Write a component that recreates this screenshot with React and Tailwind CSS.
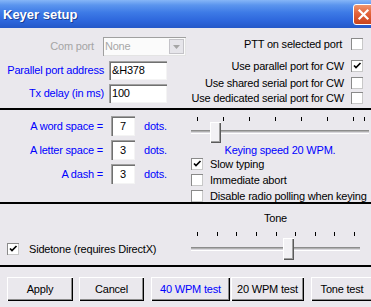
import React from "react";

function Check({ checked }) {
  return (
    <div className="relative w-[12px] h-[12px] shrink-0 bg-white shadow-[inset_1px_1px_0_#8a8a8a,inset_-1px_-1px_0_#c8c8c8]">
      {checked && (
        <svg className="absolute left-0 top-0" width="12" height="12" viewBox="0 0 12 12">
          <path d="M3 5.5 L5 7.5 L9.5 3" fill="none" stroke="#000" strokeWidth="1.7" />
        </svg>
      )}
    </div>
  );
}

function Sep() {
  return <div className="h-[2px] w-full bg-black shrink-0" />;
}

function Thumb({ className }) {
  return (
    <div
      className={
        "absolute w-[11px] bg-[#f2f1f4] shadow-[inset_1px_1px_0_#fff,inset_-1px_-1px_0_#5a5a5a,inset_-2px_-2px_0_#a0a0a0] " +
        className
      }
    />
  );
}

function Track({ className }) {
  return (
    <div
      className={
        "absolute left-0 right-0 h-[4px] bg-[#d8d6dc] shadow-[inset_0_1px_0_#8c8c8c,inset_0_2px_0_#b0b0b0,inset_0_-1px_0_#fff] " +
        className
      }
    />
  );
}

function Tick() {
  return <div className="w-px h-[4px] bg-black" />;
}

function Btn({ children, className }) {
  return (
    <div
      className={
        "h-[24px] flex items-center justify-center shrink-0 bg-[#eae8ed] shadow-[inset_1px_1px_0_#fff,inset_-1px_-1px_0_#000,inset_-2px_-2px_0_#8c8c8c] " +
        className
      }
    >
      {children}
    </div>
  );
}

function CheckRow({ label, checked, gap }) {
  return (
    <div className="h-[12px] flex items-center">
      <span className="whitespace-nowrap">{label}</span>
      <div className={gap}>
        <Check checked={checked} />
      </div>
    </div>
  );
}

export default function App() {
  return (
    <div className="w-[371px] h-[307px] overflow-hidden bg-[#eae8ed] flex flex-col font-['Liberation_Sans',Arial,sans-serif] text-[11px] tracking-[-0.2px] leading-[13px] text-black">
      {/* Title bar */}
      <div className="h-[28px] shrink-0 flex items-center pl-[3px] bg-[linear-gradient(180deg,#86b6f7_0%,#5b95ee_18%,#3d7ae6_45%,#2d66dc_75%,#2458c8_100%)]">
        <span className="text-white font-bold text-[13px] tracking-normal [text-shadow:1px_1px_0_#1a3f95]">
          Keyer setup
        </span>
        <div className="ml-auto -mr-[3px] w-[21px] h-[21px] rounded-[3px] border border-white bg-[linear-gradient(180deg,#f0956c_0%,#e2623a_45%,#c9441e_100%)] flex items-center justify-center">
          <svg width="13" height="13" viewBox="0 0 13 13">
            <path d="M2.5 2.5 L10.5 10.5 M10.5 2.5 L2.5 10.5" stroke="#fff" strokeWidth="2.2" strokeLinecap="square" />
          </svg>
        </div>
      </div>

      {/* Section 1 */}
      <div className="h-[80px] shrink-0 flex">
        <div className="w-[186px] flex flex-col pt-[9px]">
          <div className="h-[19px] flex items-center">
            <span className="w-[104px] text-right text-[#a5a5a5]">Com port</span>
            <div className="ml-[9px] w-[92px] h-[19px] flex bg-[#fbfbfb] shadow-[inset_1px_1px_0_#a0a0a0,inset_-1px_-1px_0_#e4e4e4]">
              <span className="pl-[2px] self-center text-[#a8a8a8]">None</span>
              <div className="ml-auto mt-[2px] mr-[2px] w-[15px] h-[15px] bg-[#e6e5ea] border border-[#c4c3c8] flex items-center justify-center">
                <svg width="7" height="4" viewBox="0 0 7 4">
                  <path d="M0 0 H7 L3.5 4 Z" fill="#a5a5a5" />
                </svg>
              </div>
            </div>
          </div>
          <div className="mt-[5px] h-[19px] flex items-center">
            <span className="w-[104px] text-right text-[#0000ff]">Parallel port address</span>
            <div className="ml-[5px] w-[58px] h-[19px] bg-white flex items-center pl-[3px] shadow-[inset_1px_1px_0_#a0a0a0,inset_2px_2px_0_#707070,inset_-1px_-1px_0_#f4f4f4]">
              &amp;H378
            </div>
          </div>
          <div className="mt-[4px] h-[19px] flex items-center">
            <span className="w-[104px] text-right text-[#0000ff]">Tx delay (in ms)</span>
            <div className="ml-[5px] w-[58px] h-[19px] bg-white flex items-center pl-[3px] shadow-[inset_1px_1px_0_#a0a0a0,inset_2px_2px_0_#707070,inset_-1px_-1px_0_#f4f4f4]">
              100
            </div>
          </div>
        </div>
        <div className="flex-1 flex flex-col items-end pr-[8px]">
          <div className="mt-[10px]">
            <CheckRow label="PTT on selected port" gap="ml-[9px]" />
          </div>
          <div className="mt-[10px]">
            <CheckRow label="Use parallel port for CW" checked gap="ml-[7px]" />
          </div>
          <div className="mt-[5px]">
            <CheckRow label="Use shared serial port for CW" gap="ml-[7px]" />
          </div>
          <div className="mt-[3px]">
            <CheckRow label="Use dedicated serial port for CW" gap="ml-[7px]" />
          </div>
        </div>
      </div>

      <Sep />

      {/* Section 2 */}
      <div className="h-[92px] shrink-0 flex">
        <div className="w-[191px] flex flex-col pt-[6px] gap-[4px] text-[#0000ff]">
          {[
            ["A word space =", "7"],
            ["A letter space =", "3"],
            ["A dash =", "3"],
          ].map(([l, v]) => (
            <div key={l} className="h-[20px] flex items-center">
              <span className="w-[103px] text-right">{l}</span>
              <div className="ml-[8px] w-[24px] h-[20px] bg-white text-black flex items-center justify-center shadow-[inset_1px_1px_0_#a0a0a0,inset_2px_2px_0_#707070,inset_-1px_-1px_0_#f4f4f4]">
                {v}
              </div>
              <span className="ml-[9px]">dots.</span>
            </div>
          ))}
        </div>
        <div className="flex flex-col pt-[7px]">
          <div className="relative w-[178px] h-[27px]">
            <div className="ml-[6px] w-[157px] flex justify-between">
              <Tick /><Tick /><Tick /><Tick /><Tick /><Tick /><Tick />
            </div>
            <div className="absolute left-[173px] top-0">
              <Tick />
            </div>
            <Track className="top-[13px]" />
            <Thumb className="left-[19px] top-[5px] h-[21px]" />
          </div>
          <div className="w-[178px] h-[13px] text-center text-[#0000ff]">Keying speed 20 WPM.</div>
          <div className="mt-[1px] flex flex-col gap-[4px]">
            <div className="h-[12px] flex items-center">
              <Check checked />
              <span className="ml-[7px]">Slow typing</span>
            </div>
            <div className="h-[12px] flex items-center">
              <Check />
              <span className="ml-[7px]">Immediate abort</span>
            </div>
            <div className="h-[12px] flex items-center">
              <Check />
              <span className="ml-[7px] whitespace-nowrap">Disable radio polling when keying</span>
            </div>
          </div>
        </div>
      </div>

      <Sep />

      {/* Section 3 */}
      <div className="h-[61px] shrink-0 flex">
        <div className="w-[191px] pl-[7px] pt-[39px]">
          <div className="h-[12px] flex items-center">
            <Check checked />
            <span className="ml-[10px] whitespace-nowrap">Sidetone (requires DirectX)</span>
          </div>
        </div>
        <div className="flex flex-col pt-[8px]">
          <div className="w-[169px] text-center">Tone</div>
          <div className="relative mt-[7px] w-[169px] h-[29px]">
            <div className="ml-[6px] w-[158px] flex justify-between">
              <Tick /><Tick /><Tick /><Tick /><Tick /><Tick /><Tick /><Tick /><Tick />
            </div>
            <Track className="top-[15px]" />
            <Thumb className="left-[92px] top-[6px] h-[22px]" />
          </div>
        </div>
      </div>

      <Sep />

      {/* Buttons */}
      <div className="pt-[10px] pl-[7px] flex">
        <Btn className="w-[66px]">Apply</Btn>
        <Btn className="ml-[6px] w-[65px]">Cancel</Btn>
        <Btn className="ml-[7px] w-[79px] text-[#0000ff]">40 WPM test</Btn>
        <Btn className="ml-[1px] w-[73px]">20 WPM test</Btn>
        <Btn className="ml-[7px] w-[62px]">Tone test</Btn>
      </div>
    </div>
  );
}
